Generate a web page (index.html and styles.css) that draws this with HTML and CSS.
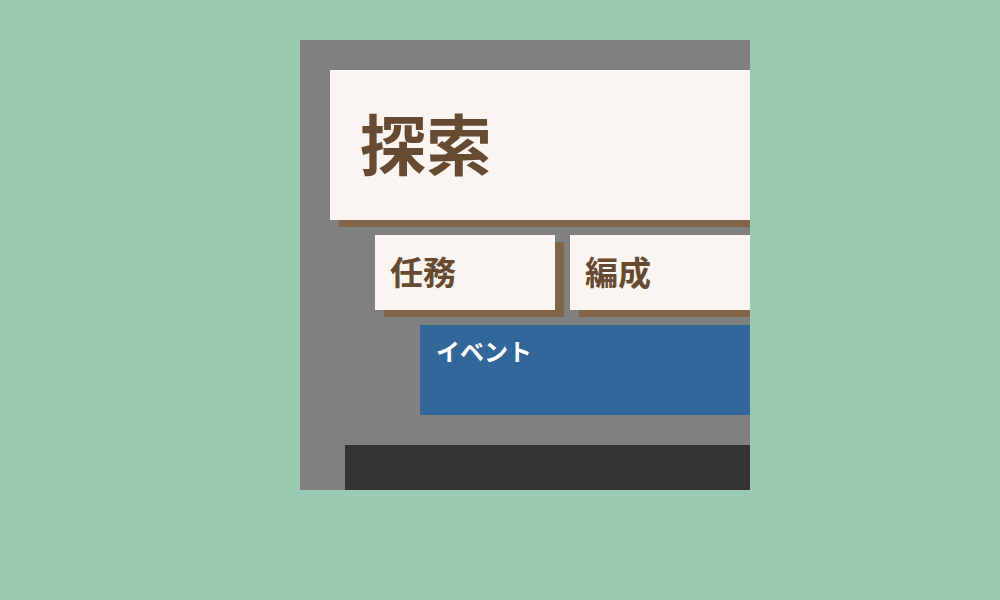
FILE: index.html
```html
<!DOCTYPE html>
<html lang="ja">
<head>
    <meta charset="UTF-8">
    <meta name="viewport" content="width=device-width, initial-scale=1.0">
    <title>メニュー</title>
    <link rel="stylesheet" href="styles.css">
</head>
<body>
    <div class="menu-panel">
        <div class="card card-main">探索</div>

        <div class="sub-row">
            <div class="card card-sub">任務</div>
            <div class="card card-sub">編成</div>
        </div>

        <div class="event-box">イベント</div>

        <div class="footer-bar"></div>
    </div>
</body>
</html>
```

FILE: styles.css
```css
:root {
    --bg-green: #99cbb2;
    --panel-gray: #808080;
    --card-bg: #faf5f1;
    --card-text: #664a31;
    --card-shadow: #80654a;
    --event-blue: #336699;
    --bar-dark: #333333;
}

* {
    margin: 0;
    padding: 0;
    box-sizing: border-box;
    font-family: 'Noto Sans CJK JP', 'Noto Sans', sans-serif;
}

body {
    min-height: 100vh;
    background: var(--bg-green);
    padding: 40px 0 0 300px;
}

.menu-panel {
    width: 450px;
    height: 450px;
    background: var(--panel-gray);
    padding: 30px 0 0 30px;
    overflow: hidden;
}

.card {
    background: var(--card-bg);
    color: var(--card-text);
    font-weight: 700;
    box-shadow: 9px 7px 0 var(--card-shadow);
}

.card-main {
    width: 520px;
    height: 150px;
    display: flex;
    align-items: center;
    padding: 0 0 8px 30px;
    font-size: 66px;
    line-height: 1;
}

.sub-row {
    display: flex;
    gap: 15px;
    margin: 15px 0 0 45px;
}

.card-sub {
    flex: 0 0 180px;
    height: 75px;
    display: flex;
    align-items: center;
    padding: 0 0 3px 15px;
    font-size: 33px;
    line-height: 1;
}

.event-box {
    width: 400px;
    height: 90px;
    margin: 15px 0 0 90px;
    padding: 14px 16px;
    background: var(--event-blue);
    color: #ffffff;
    font-size: 24px;
    font-weight: 700;
    line-height: 24px;
}

.footer-bar {
    width: 500px;
    height: 60px;
    margin: 30px 0 0 15px;
    background: var(--bar-dark);
}
```
